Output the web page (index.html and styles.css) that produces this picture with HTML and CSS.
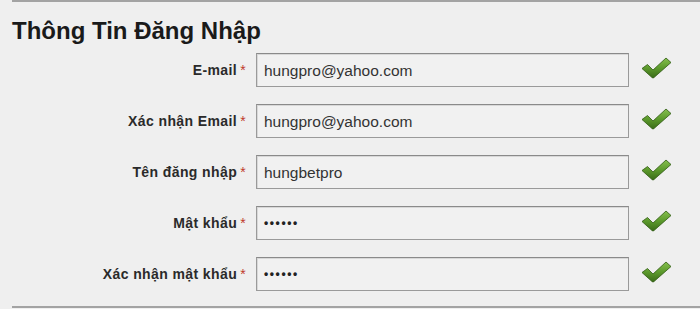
FILE: index.html
```html
<!DOCTYPE html>
<html lang="vi">
<head>
    <meta charset="UTF-8">
    <title>Thông Tin Đăng Nhập</title>
    <link rel="stylesheet" href="styles.css">
</head>
<body>
    <div class="panel">
        <h2>Thông Tin Đăng Nhập</h2>

        <div class="form">
            <div class="row">
                <label>E-mail<span class="req">*</span></label>
                <div class="field">hungpro@yahoo.com</div>
                <svg class="ok" viewBox="0 0 32 24"><use href="#check"/></svg>
            </div>
            <div class="row">
                <label>Xác nhận Email<span class="req">*</span></label>
                <div class="field">hungpro@yahoo.com</div>
                <svg class="ok" viewBox="0 0 32 24"><use href="#check"/></svg>
            </div>
            <div class="row">
                <label>Tên đăng nhập<span class="req">*</span></label>
                <div class="field">hungbetpro</div>
                <svg class="ok" viewBox="0 0 32 24"><use href="#check"/></svg>
            </div>
            <div class="row">
                <label>Mật khẩu<span class="req">*</span></label>
                <div class="field pass">••••••</div>
                <svg class="ok" viewBox="0 0 32 24"><use href="#check"/></svg>
            </div>
            <div class="row">
                <label>Xác nhận mật khẩu<span class="req">*</span></label>
                <div class="field pass">••••••</div>
                <svg class="ok" viewBox="0 0 32 24"><use href="#check"/></svg>
            </div>
        </div>
    </div>

    <!-- shared check icon -->
    <svg width="0" height="0" class="defs">
        <defs>
            <linearGradient id="g" x1="0" y1="0" x2="0" y2="1">
                <stop offset="0" stop-color="#86bf4e"/>
                <stop offset="0.5" stop-color="#5c9a2c"/>
                <stop offset="1" stop-color="#3a6b18"/>
            </linearGradient>
            <symbol id="check" viewBox="0 0 32 24">
                <path d="M2 13.5 L7.5 9.5 L13 15 L26 3 L31 7.5 L14 22.5 Q13 23.5 12 22.5 Z" fill="url(#g)" stroke="#2f5a12" stroke-width="0.8" stroke-linejoin="round"/>
            </symbol>
        </defs>
    </svg>
</body>
</html>
```

FILE: styles.css
```css
body {
    margin: 0;
    background: #efefef;
    font-family: Arial, "Liberation Sans", sans-serif;
    color: #222;
}
.panel {
    margin-left: 12px;
    border-top: 2px solid #a3a3a3;
    border-bottom: 2px solid #a3a3a3;
    padding: 15px 0 15px;
}
h2 {
    margin: 0 0 8px;
    font-size: 24px;
    line-height: 28px;
    font-weight: bold;
    color: #1a1a1a;
}
.form {
    display: flex;
    flex-direction: column;
    gap: 17px;
}
.row {
    display: grid;
    grid-template-columns: 234px 373px 32px;
    column-gap: 10px;
    align-items: center;
}
.row label {
    text-align: right;
    font-size: 14px;
    letter-spacing: 0.4px;
    font-weight: bold;
    color: #2a2a2a;
}
.req {
    color: #c0392b;
    margin-left: 3px;
    font-weight: normal;
}
.field {
    height: 34px;
    box-sizing: border-box;
    border: 1px solid #9a9a9a;
    border-top-color: #8a8a8a;
    box-shadow: inset 1px 1px 0 #d8d8d8;
    background: #f1f1f1;
    padding: 0 7px;
    line-height: 33px;
    font-size: 15.5px;
    color: #333;
}
.field.pass {
    font-size: 12px;
    letter-spacing: 1.6px;
    font-weight: bold;
    color: #222;
}
.ok {
    width: 32px;
    height: 24px;
    margin-left: 1px;
    margin-top: -6px;
}
.defs {
    position: absolute;
}
```
